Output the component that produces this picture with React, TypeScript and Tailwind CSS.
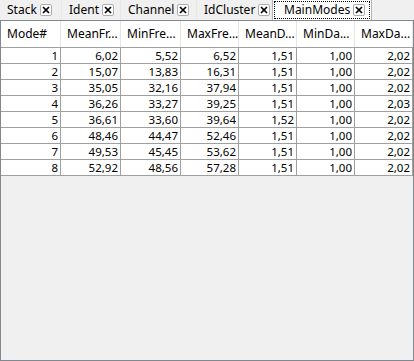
import React from "react"

const tabs = [
  { label: "Stack", width: "w-[62px]" },
  { label: "Ident", width: "w-[59px]" },
  { label: "Channel", width: "w-[76px]" },
  { label: "IdCluster", width: "w-[75px]" },
]

const columns = [
  { title: "Mode#", width: "w-[60px]" },
  { title: "MeanFr...", width: "w-[60px]" },
  { title: "MinFre...", width: "w-[60px]" },
  { title: "MaxFre...", width: "w-[58px]" },
  { title: "MeanD...", width: "w-[58px]" },
  { title: "MinDa...", width: "w-[58px]" },
  { title: "MaxDa...", width: "w-[58px]" },
]

const rows = [
  ["1", "6,02", "5,52", "6,52", "1,51", "1,00", "2,02"],
  ["2", "15,07", "13,83", "16,31", "1,51", "1,00", "2,02"],
  ["3", "35,05", "32,16", "37,94", "1,51", "1,00", "2,02"],
  ["4", "36,26", "33,27", "39,25", "1,51", "1,00", "2,03"],
  ["5", "36,61", "33,60", "39,64", "1,52", "1,00", "2,02"],
  ["6", "48,46", "44,47", "52,46", "1,51", "1,00", "2,02"],
  ["7", "49,53", "45,45", "53,62", "1,51", "1,00", "2,02"],
  ["8", "52,92", "48,56", "57,28", "1,51", "1,00", "2,02"],
]

function CloseBox() {
  return (
    <span className="flex h-[12px] w-[12px] shrink-0 items-center justify-center rounded-[2px] border border-[#adadad] bg-white">
      <svg width="8" height="8" viewBox="0 0 8 8">
        <path d="M1 1 L7 7 M7 1 L1 7" stroke="#000" strokeWidth="1.7" />
      </svg>
    </span>
  )
}

export default function App() {
  return (
    <div
      className="flex h-[361px] w-[414px] flex-col bg-[#f0f0f0] text-[12px] text-black"
      style={{ fontFamily: '"Noto Sans", "Liberation Sans", sans-serif' }}
    >
      <div className="flex h-[20px] items-stretch">
        {tabs.map((t) => (
          <div
            key={t.label}
            className={`flex ${t.width} items-center gap-[3px] border-r border-[#e8e8e8] pl-[7px]`}
          >
            <span className="leading-none">{t.label}</span>
            <CloseBox />
          </div>
        ))}
        <div className="flex w-[100px] border-x border-[#b4b4b4] bg-white p-[1px]">
          <div className="flex flex-1 items-center gap-[3px] border border-dotted border-black pl-[9px]">
            <span className="leading-none">MainModes</span>
            <CloseBox />
          </div>
        </div>
      </div>

      <div className="flex flex-1 flex-col border border-[#828790]">
        <div className="flex h-[27px] border-b border-[#a0a0a0] bg-white">
          {columns.map((c) => (
            <div
              key={c.title}
              className={`flex ${c.width} items-center overflow-hidden border-r border-[#e5e5e5] pl-[6px] whitespace-nowrap`}
            >
              {c.title}
            </div>
          ))}
        </div>
        {rows.map((r) => (
          <div key={r[0]} className="flex h-[16px] border-b border-[#a0a0a0] bg-white text-[11.5px]">
            {r.map((v, i) => (
              <div
                key={i}
                className={`flex ${columns[i].width} items-center justify-end border-r border-[#a0a0a0] pr-[2px] leading-none`}
              >
                {v}
              </div>
            ))}
          </div>
        ))}
        <div className="flex-1" />
      </div>
    </div>
  )
}
